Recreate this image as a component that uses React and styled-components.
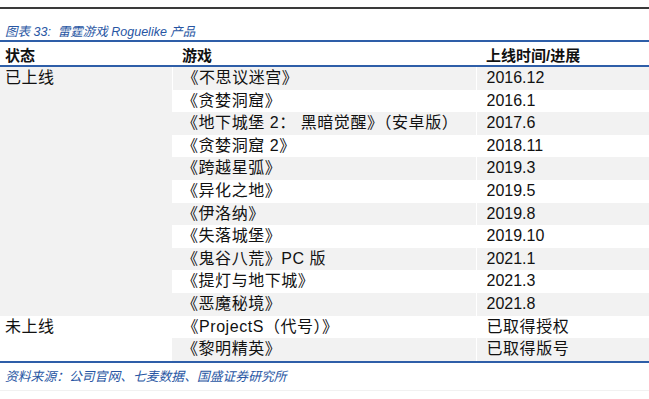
import React from 'react';
import styled, { createGlobalStyle } from 'styled-components';

const GlobalStyle = createGlobalStyle`
  body {
    margin: 0;
    background: #ffffff;
    font-family: "Liberation Sans", "Noto Sans CJK SC", sans-serif;
  }
`;

const Page = styled.div`
  width: 649px;
  height: 399px;
  padding-top: 7px;
  box-sizing: border-box;
  overflow: hidden;
`;

const TopRule = styled.div`
  height: 2px;
  background: #3a3a3a;
`;

const Caption = styled.div`
  margin-top: 15px;
  padding-left: 5px;
  height: 16px;
  line-height: 16px;
  font-size: 12.5px;
  font-style: italic;
  color: #2856a3;
  white-space: pre;
`;

const Table = styled.table`
  width: 649px;
  border-collapse: collapse;
  table-layout: fixed;
  border-top: 2px solid #2e5ea8;
  border-bottom: 2px solid #2e5ea8;
`;

const HeadCell = styled.th`
  height: 22px;
  padding: 1px 0 0 ${p => p.$indent}px;
  text-align: left;
  vertical-align: middle;
  font-size: 15px;
  font-weight: bold;
  color: #111;
  border-bottom: 2px solid #2e5ea8;
`;

const Cell = styled.td`
  height: 22.6px;
  padding: 0 0 0 ${p => p.$indent}px;
  line-height: 22.6px;
  vertical-align: top;
  font-size: 16px;
  letter-spacing: ${p => (p.$wide ? '0.55px' : '0')};
  color: #111;
  white-space: nowrap;
  background: ${p => (p.$shaded ? '#f2f2f2' : '#ffffff')};
  border-left: 1px solid #ffffff;
  &:first-child {
    border-left: none;
  }
`;

const Footer = styled.div`
  margin-top: 5px;
  padding-left: 5px;
  height: 22px;
  line-height: 18px;
  font-size: 12.8px;
  font-style: italic;
  color: #2856a3;
  border-bottom: 1px solid #f1f1f1;
`;

const released = [
  ['《不思议迷宫》', '2016.12'],
  ['《贪婪洞窟》', '2016.1'],
  ['《地下城堡 2： 黑暗觉醒》（安卓版）', '2017.6'],
  ['《贪婪洞窟 2》', '2018.11'],
  ['《跨越星弧》', '2019.3'],
  ['《异化之地》', '2019.5'],
  ['《伊洛纳》', '2019.8'],
  ['《失落城堡》', '2019.10'],
  ['《鬼谷八荒》PC 版', '2021.1'],
  ['《提灯与地下城》', '2021.3'],
  ['《恶魔秘境》', '2021.8'],
];

const upcoming = [
  ['《ProjectS（代号）》', '已取得授权'],
  ['《黎明精英》', '已取得版号'],
];

export default function App() {
  return (
    <Page>
      <GlobalStyle />
      <TopRule />
      <Caption>{'图表 33:  雷霆游戏 Roguelike 产品'}</Caption>
      <Table>
        <colgroup>
          <col style={{ width: 172 }} />
          <col style={{ width: 304 }} />
          <col style={{ width: 173 }} />
        </colgroup>
        <thead>
          <tr>
            <HeadCell $indent={5}>状态</HeadCell>
            <HeadCell $indent={10}>游戏</HeadCell>
            <HeadCell $indent={10}>上线时间/进展</HeadCell>
          </tr>
        </thead>
        <tbody>
          {released.map(([game, date], i) => (
            <tr key={game}>
              {i === 0 && (
                <Cell $indent={5} $wide $shaded rowSpan={released.length}>已上线</Cell>
              )}
              <Cell $indent={10} $wide $shaded={i % 2 === 0}>{game}</Cell>
              <Cell $indent={10} $shaded={i % 2 === 0}>{date}</Cell>
            </tr>
          ))}
          {upcoming.map(([game, status], i) => (
            <tr key={game}>
              {i === 0 && (
                <Cell $indent={5} $wide rowSpan={upcoming.length}>未上线</Cell>
              )}
              <Cell $indent={10} $wide $shaded={i % 2 === 1}>{game}</Cell>
              <Cell $indent={10} $wide $shaded={i % 2 === 1}>{status}</Cell>
            </tr>
          ))}
        </tbody>
      </Table>
      <Footer>资料来源：公司官网、七麦数据、国盛证券研究所</Footer>
    </Page>
  );
}
